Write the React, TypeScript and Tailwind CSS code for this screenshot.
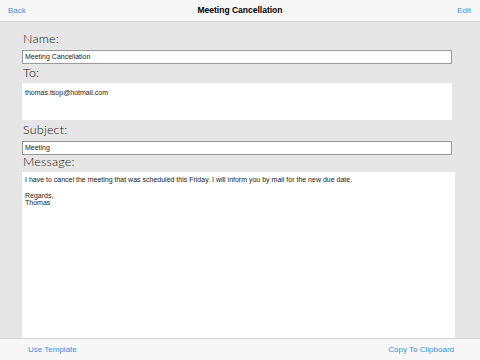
import React from 'react';

const sans = { fontFamily: '"Liberation Sans", Arial, sans-serif' };

const Label: React.FC<{ text: string; className: string }> = ({ text, className }) => (
  <div
    className={`flex items-end text-[12.5px] font-light text-[#111] pl-[1px] tracking-[0.2px] ${className}`}
    style={{ fontFamily: 'Lato, "DejaVu Sans", sans-serif' }}
  >
    {text}
  </div>
);

const Field: React.FC<{ value: string }> = ({ value }) => (
  <div className="w-[430px] h-[14px] bg-white border border-[#9c9c9c] shadow-[inset_0_0_1px_#bbb] flex items-center px-[2px] text-[7px] text-[#222]">
    {value}
  </div>
);

export default function App() {
  return (
    <div className="w-[480px] h-[360px] flex flex-col bg-[#e6e6e6] overflow-hidden" style={sans}>
      <div className="h-[22px] shrink-0 bg-[#f7f7f7] border-b border-[#d4d4d4] flex items-center justify-between pl-[8px] pr-[9px] relative">
        <span className="text-[8px] text-[#3d8fe0]">Back</span>
        <span className="absolute left-0 right-0 text-center text-[8.5px] font-bold text-black">Meeting Cancellation</span>
        <span className="text-[8px] text-[#3d8fe0]">Edit</span>
      </div>

      <div className="flex-1 flex flex-col pl-[22px] min-h-0">
        <Label text="Name:" className="h-[28px] pb-[1px]" />
        <Field value="Meeting Cancellation" />

        <Label text="To:" className="h-[19px] pb-0" />
        <div className="w-[430px] h-[37px] bg-white px-[3px] pt-[5px] text-[7px] text-[#222]">
          thomas.tsop@hotmail.com
        </div>

        <Label text="Subject:" className="h-[21px] pb-[1px]" />
        <Field value="Meeting" />

        <Label text="Message:" className="h-[17px] pb-0" />
        <div className="w-[433px] flex-1 bg-white px-[3px] pt-[4px] text-[7px] leading-[7.8px] text-[#222]">
          <p>I have to cancel the meeting that was scheduled this Friday. I will inform you by mail for the new due date.</p>
          <p className="mt-[7.8px]">Regards,</p>
          <p>Thomas</p>
        </div>
      </div>

      <div className="h-[22px] shrink-0 bg-[#f7f7f7] border-t border-[#d4d4d4] flex items-center justify-between pl-[28px] pr-[26px]">
        <span className="text-[8px] text-[#3d8fe0]">Use Template</span>
        <span className="text-[8px] text-[#3d8fe0]">Copy To Clipboard</span>
      </div>
    </div>
  );
}
